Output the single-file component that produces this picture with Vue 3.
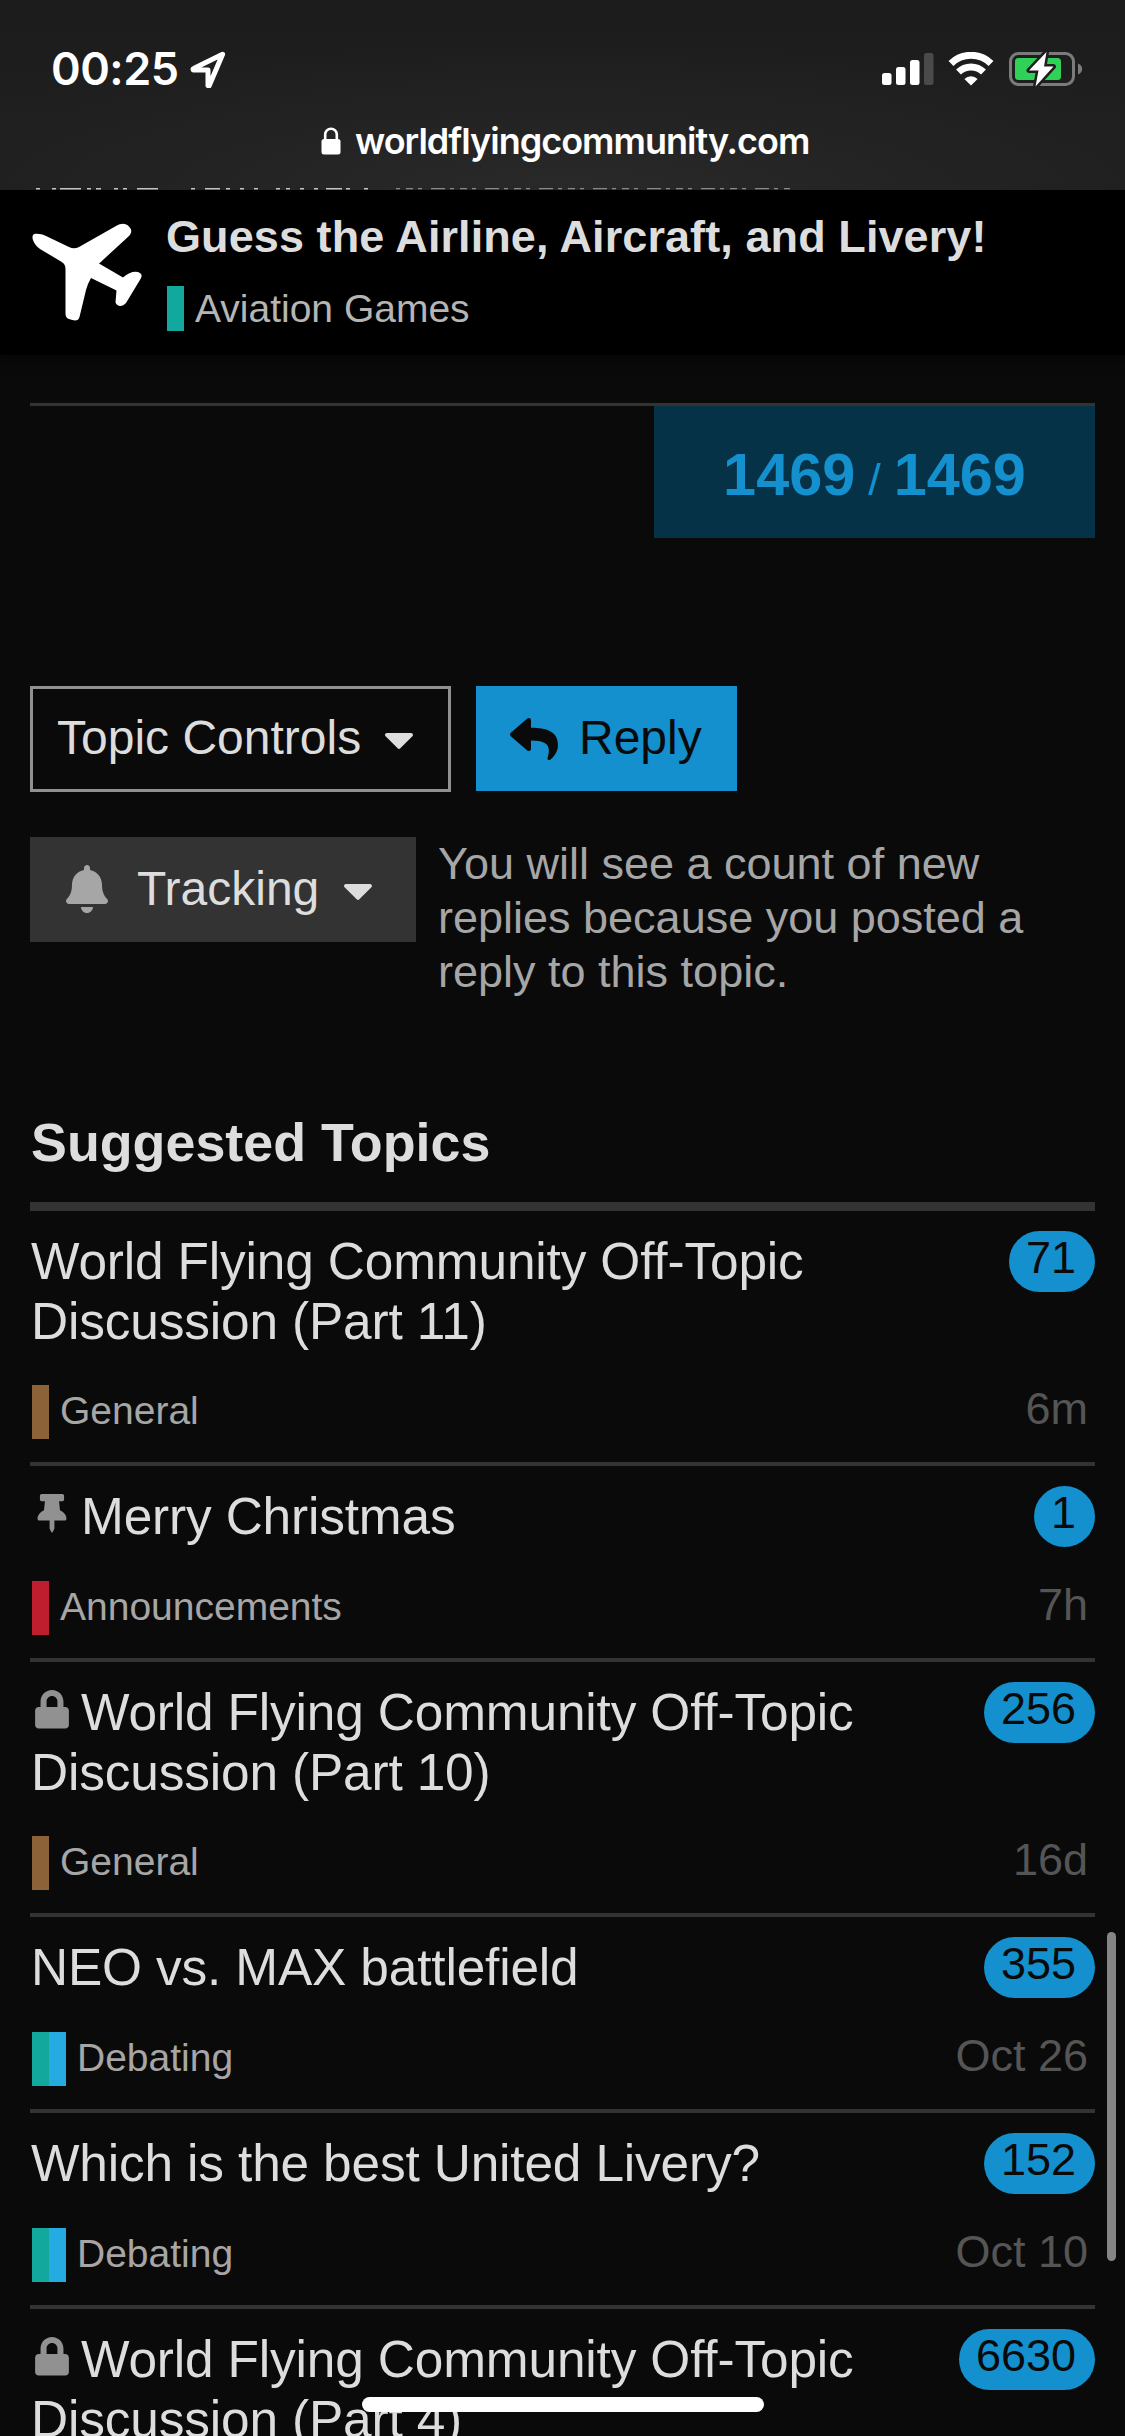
<template>
  <div class="screen">
    <div class="browser-bar">
      <div class="status-row">
        <div class="status-left">
          <span class="clock">00:25</span>
          <svg class="location" viewBox="0 0 36 37" aria-hidden="true">
            <path d="M32.6 3.2 3.6 17.6a.7.7 0 0 0 .3 1.4H18v15a.7.7 0 0 0 1.4.3z"/>
          </svg>
        </div>
        <div class="status-right">
          <svg class="signal" viewBox="0 0 52 34" aria-hidden="true">
            <rect x="0" y="21" width="9.5" height="12" rx="2.5" fill="#fff"/>
            <rect x="14" y="15" width="9.5" height="18" rx="2.5" fill="#fff"/>
            <rect x="28" y="8" width="9.5" height="25" rx="2.5" fill="#fff"/>
            <rect x="42" y="1" width="9.5" height="32" rx="2.5" fill="#4a4a4a"/>
          </svg>
          <svg class="wifi" viewBox="0 0 46 34" aria-hidden="true">
            <path d="M3 11.5a28.5 28.5 0 0 1 40 0" class="arc" stroke-width="7"/>
            <path d="M10.5 20a18 18 0 0 1 25 0" class="arc" stroke-width="7"/>
            <path d="M23 33.5l-6.6-6.6a9.6 9.6 0 0 1 13.2 0z" fill="#fff"/>
          </svg>
          <svg class="battery" viewBox="0 0 74 38" aria-hidden="true">
            <rect x="1.5" y="3.5" width="63" height="31" rx="8" fill="none" stroke="#7b7b7b" stroke-width="3"/>
            <path d="M69 13.5c5.5 2 5.5 9 0 11z" fill="#7b7b7b"/>
            <rect x="6" y="8" width="46" height="22" rx="3.5" fill="#30d158"/>
            <path class="bolt" d="M37.5 2 20 20.500h9.500l-3 16L44.500 16.500H35z"/>
          </svg>
        </div>
      </div>
      <div class="url-row">
        <svg class="url-lock" viewBox="0 0 20 28" aria-hidden="true">
          <rect x="0.5" y="12" width="19" height="15.5" rx="2.5" fill="#fff"/>
          <path d="M4.2 13V7.500a5.800 5.800 0 0 1 11.600 0V13" fill="none" stroke="#fff" stroke-width="2.6"/>
        </svg>
        <span>worldflyingcommunity.com</span>
      </div>
      <!-- edge of the post that is scrolled under the bar -->
      <svg class="scrolled-edge" viewBox="0 0 1125 2" aria-hidden="true">
        <rect v-for="(seg, i) in edgeSegments" :key="i" :x="seg[0]" y="0" :width="seg[1]" height="1.5" fill="#c4c4c4"/>
        <path d="M396 .7H790" stroke="#8a8a8a" stroke-width="1.2" stroke-dasharray="4 6 7 5 4 9 14 5"/>
      </svg>
    </div>

    <header class="site-header">
      <svg class="logo" viewBox="0 0 110 98" aria-hidden="true">
        <path d="M1 12C2 10 9 10.500 14 13L37 24Q42 26.500 47 24L84 3C90-.5 94 .5 97 3.500 100 6.500 100 9.500 97 13L72 36Q69 39 67 40.500L91 54.500C97 49 104 47.500 108 50Q111 52 108.500 56L94 80C90 84.500 85 83.500 83.500 79.500Q84 73 84.500 67.500L59 55Q55.500 61 54 67L47.500 94C46.500 98.500 42 98 37 96 33.500 94.500 33.500 92 33.500 89V47C33.500 43 33 41 29 38.500L8 26C3 22.500-1 16 1 12z"/>
      </svg>
      <div class="header-text">
        <h1>Guess the Airline, Aircraft, and Livery!</h1>
        <div class="header-category">
          <span class="bar teal"></span>
          <span>Aviation Games</span>
        </div>
      </div>
    </header>

    <main>
      <div class="progress-line">
        <div class="progress">
          <strong>1469</strong><span class="slash">/</span><strong>1469</strong>
        </div>
      </div>

      <div class="footer-buttons">
        <button class="btn controls">
          <span>Topic Controls</span>
          <svg class="caret" viewBox="11 192 298 169"><path :d="icons.caret"/></svg>
        </button>
        <button class="btn reply">
          <svg class="reply-icon" viewBox="0 32 512 448"><path :d="icons.reply"/></svg>
          <span>Reply</span>
        </button>
      </div>

      <div class="notifications">
        <button class="btn tracking">
          <svg class="bell" viewBox="0 0 448 512"><path :d="icons.bell"/></svg>
          <span>Tracking</span>
          <svg class="caret" viewBox="11 192 298 169"><path :d="icons.caret"/></svg>
        </button>
        <p>You will see a count of new replies because you posted a reply to this topic.</p>
      </div>

      <h3>Suggested Topics</h3>
      <ul class="topic-list">
        <li v-for="topic in topics" :key="topic.title" class="topic">
          <div class="topic-main">
            <a class="title">
              <svg v-if="topic.icon" class="status-icon" :viewBox="topic.icon === 'lock' ? '0 0 448 512' : '0 0 384 512'">
                <path :d="icons[topic.icon]"/>
              </svg>{{ topic.title }}
            </a>
            <span class="badge">{{ topic.unread }}</span>
          </div>
          <div v-if="topic.category" class="topic-meta">
            <div class="category">
              <span v-for="color in topic.colors" :key="color" class="bar" :class="color"></span>
              <span class="category-name">{{ topic.category }}</span>
            </div>
            <span class="date">{{ topic.date }}</span>
          </div>
        </li>
      </ul>
    </main>

    <div class="scrollbar"></div>
    <div class="home-indicator"></div>
  </div>
</template>

<script setup>
const topics = [
  { title: 'World Flying Community Off-Topic Discussion (Part 11)', unread: 71, category: 'General', colors: ['brown'], date: '6m' },
  { title: 'Merry Christmas', icon: 'pin', unread: 1, category: 'Announcements', colors: ['red'], date: '7h' },
  { title: 'World Flying Community Off-Topic Discussion (Part 10)', icon: 'lock', unread: 256, category: 'General', colors: ['brown'], date: '16d' },
  { title: 'NEO vs. MAX battlefield', unread: 355, category: 'Debating', colors: ['teal', 'blue'], date: 'Oct 26' },
  { title: 'Which is the best United Livery?', unread: 152, category: 'Debating', colors: ['teal', 'blue'], date: 'Oct 10' },
  { title: 'World Flying Community Off-Topic Discussion (Part 4)', icon: 'lock', unread: 6630 }
]

// [x, width]
const edgeSegments = [
  [36, 4], [52, 4], [60, 21], [87, 4], [96, 5], [114, 4], [123, 4], [137, 21], [191, 4], [205, 15], [226, 4],
  [240, 4], [254, 4], [276, 4], [286, 4], [300, 4], [314, 4], [326, 16], [346, 4], [364, 4]
]

const icons = {
  caret: 'M31.3 192h257.3c17.8 0 26.7 21.5 14.1 34.1L174.1 354.8c-7.8 7.8-20.5 7.8-28.3 0L17.2 226.1C4.6 213.5 13.5 192 31.3 192z',
  reply: 'M8.309 189.836L184.313 37.851C199.719 24.546 224 35.347 224 56.015v80.053c160.629 1.839 288 34.032 288 186.258 0 61.441-39.581 122.309-83.333 154.132-13.653 9.931-33.111-2.533-28.077-18.631 45.344-145.012-21.507-183.51-176.59-185.742V360c0 20.7-24.3 31.453-39.687 18.164l-176.004-152c-11.071-9.562-11.086-26.753 0-36.328z',
  bell: 'M224 512c35.32 0 63.97-28.65 63.97-64H160.03c0 35.35 28.65 64 63.97 64zm215.39-149.71c-19.32-20.76-55.47-51.99-55.47-154.29 0-77.7-54.48-139.9-127.94-155.16V32c0-17.67-14.32-32-31.98-32s-31.98 14.33-31.98 32v20.84C118.56 68.1 64.08 130.3 64.08 208c0 102.3-36.15 133.53-55.47 154.29-6 6.45-8.66 14.16-8.61 21.71.11 16.4 12.98 32 32.1 32h383.8c19.12 0 32-15.6 32.1-32 .05-7.55-2.61-15.27-8.61-21.71z',
  pin: 'M298.028 214.267L285.793 96H328c13.255 0 24-10.745 24-24V24c0-13.255-10.745-24-24-24H56C42.745 0 32 10.745 32 24v48c0 13.255 10.745 24 24 24h42.207L85.972 214.267C37.465 236.82 0 277.261 0 328c0 13.255 10.745 24 24 24h136v104.007c0 1.242.289 2.467.845 3.578l24 48c2.941 5.882 11.364 5.893 14.311 0l24-48a8.008 8.008 0 0 0 .845-3.578V352h136c13.255 0 24-10.745 24-24-.001-51.17-37.983-91.42-85.973-113.733z',
  lock: 'M400 224h-24v-72C376 68.2 307.8 0 224 0S72 68.2 72 152v72H48c-26.5 0-48 21.5-48 48v192c0 26.5 21.5 48 48 48h352c26.5 0 48-21.5 48-48V272c0-26.5-21.5-48-48-48zm-104 0H152v-72c0-39.7 32.3-72 72-72s72 32.3 72 72v72z'
}
</script>

<style>
body {
  margin: 0;
  background: #0a0a0a;
}
</style>

<style scoped>
.screen {
  position: relative;
  width: 1125px;
  height: 2436px;
  overflow: hidden;
  background: #0a0a0a;
  color: #ddd;
  font-family: "Liberation Sans", Arial, sans-serif;
}

svg {
  display: block;
  flex: none;
}

.browser-bar {
  position: relative;
  box-sizing: border-box;
  height: 190px;
  padding-top: 39px;
  background: radial-gradient(ellipse 760px 150px at 50% 100%, #292929, #202020 75%, transparent), linear-gradient(#1c1c1c, #202020);
  color: #fff;
  font-family: Inter, sans-serif;
}

.status-row {
  display: flex;
  justify-content: space-between;
  height: 60px;
  padding: 0 42px 0 51px;
}

.status-left,
.status-right {
  display: flex;
  align-items: center;
}

.clock {
  width: 139px;
  font-size: 45px;
  font-weight: 600;
  letter-spacing: -0.5px;
  line-height: 60px;
}

.location {
  width: 36px;
  height: 37px;
  fill: none;
  stroke: #fff;
  stroke-width: 5;
  stroke-linejoin: round;
}

.signal {
  width: 52px;
  height: 34px;
  margin-right: 14px;
}

.wifi {
  width: 46px;
  height: 34px;
  margin-right: 15px;
}

.arc {
  fill: none;
  stroke: #fff;
}

.battery {
  width: 74px;
  height: 38px;
}

.bolt {
  fill: #fff;
  stroke: #1e1e1e;
  stroke-width: 5;
  stroke-linejoin: round;
  paint-order: stroke;
}

.url-row {
  display: flex;
  align-items: center;
  height: 84px;
  padding-left: 321px;
  font-size: 36px;
  font-weight: 600;
  letter-spacing: -1px;
  line-height: 84px;
}

.url-lock {
  width: 20px;
  height: 28px;
  margin-right: 14px;
}

.scrolled-edge {
  position: absolute;
  bottom: 0;
  left: 0;
  width: 1125px;
  height: 2px;
}

.site-header {
  display: flex;
  box-sizing: border-box;
  height: 165px;
  padding: 20px 0 0 32px;
  background: #000;
  box-shadow: 0 4px 12px rgba(0, 0, 0, 0.6);
}

.logo {
  width: 110px;
  height: 98px;
  margin: 13px 24px 0 0;
  fill: #fff;
}

h1 {
  margin: 0 0 22px;
  font-size: 45px;
  font-weight: bold;
  letter-spacing: 0.09px;
  line-height: 54px;
}

.header-category {
  display: flex;
  gap: 11px;
  height: 45px;
  margin-left: 1px;
  color: #b5b5b5;
  font-size: 39px;
  line-height: 45px;
}

.bar {
  width: 17px;
}

.teal { background: #12a89d; }
.blue { background: #25aae2; }
.brown { background: #8c6238; }
.red { background: #bf1e2e; }

main {
  padding: 48px 30px 0;
}

.progress-line {
  display: flex;
  justify-content: flex-end;
  border-top: 3px solid #333;
}

.progress {
  display: flex;
  align-items: baseline;
  justify-content: center;
  width: 441px;
  height: 132px;
  background: #053247;
  color: #1390cd;
  font-size: 59.4px;
  line-height: 138px;
}

.slash {
  margin: 0 13px;
  font-size: 45px;
}

.footer-buttons {
  display: flex;
  gap: 25px;
  margin-top: 148px;
}

.btn {
  display: flex;
  align-items: center;
  box-sizing: border-box;
  height: 105px;
  margin: 0;
  border: 0;
  border-radius: 0;
  color: #ddd;
  font-family: inherit;
  font-size: 48px;
  line-height: 58px;
}

.controls {
  width: 421px;
  height: 106px;
  padding: 0 0 2px 24px;
  border: 3px solid #919191;
  background: transparent;
}

.caret {
  width: 28px;
  height: 16px;
  margin-left: 25px;
  fill: #ddd;
}

.controls .caret {
  margin: 5px 0 0 24px;
}

.reply {
  width: 261px;
  padding: 0 0 2px 34px;
  background: #1390cd;
  color: #0a0a0a;
}

.reply-icon {
  width: 48px;
  height: 42px;
  margin: 3px 21px 0 0;
  fill: #0a0a0a;
}

.notifications {
  display: flex;
  gap: 22px;
  margin-top: 45px;
}

.tracking {
  width: 386px;
  padding: 0 0 1px 36px;
  background: #333;
}

.bell {
  width: 42px;
  height: 48px;
  margin-right: 29px;
  fill: #a6a6a6;
}

.tracking .caret {
  margin-top: 5px;
}

p {
  width: 600px;
  margin: 0;
  color: #a6a6a6;
  font-size: 45px;
  line-height: 54px;
}

h3 {
  margin: 113px 0 0;
  padding: 0 0 30px 1px;
  border-bottom: 9px solid #333;
  font-size: 53.8px;
  font-weight: bold;
  line-height: 60px;
}

.topic-list {
  margin: 0;
  padding: 0;
  list-style: none;
}

.topic {
  padding-top: 20px;
  border-bottom: 4px solid #333;
}

.topic-main {
  display: flex;
  justify-content: space-between;
  align-items: flex-start;
}

.title {
  padding: 0 20px 0 1px;
  font-size: 51.4px;
  letter-spacing: -0.16px;
  line-height: 60px;
}

.status-icon {
  display: inline-block;
  width: 34px;
  height: 38.6px;
  margin: 0 12px 0 4px;
  vertical-align: 1px;
  fill: #919191;
}

.badge {
  flex: none;
  box-sizing: border-box;
  height: 61px;
  padding: 0 19px 0 17px;
  border-radius: 31px;
  background: #1390cd;
  color: #0a0a0a;
  font-size: 45px;
  line-height: 53px;
}

.topic-meta {
  display: flex;
  justify-content: space-between;
  height: 54px;
  padding: 34px 7px 23px 2px;
}

.category {
  display: flex;
}

.category-name {
  margin-left: 11px;
  color: #a6a6a6;
  font-size: 39px;
  line-height: 51px;
}

.date {
  color: #555;
  font-size: 45px;
  line-height: 48px;
}

.scrollbar {
  position: absolute;
  top: 1932px;
  right: 9px;
  width: 9px;
  height: 329px;
  border-radius: 5px;
  background: #858585;
}

.home-indicator {
  position: absolute;
  top: 2397px;
  left: 362px;
  width: 402px;
  height: 15px;
  border-radius: 8px;
  background: #fff;
}
</style>
